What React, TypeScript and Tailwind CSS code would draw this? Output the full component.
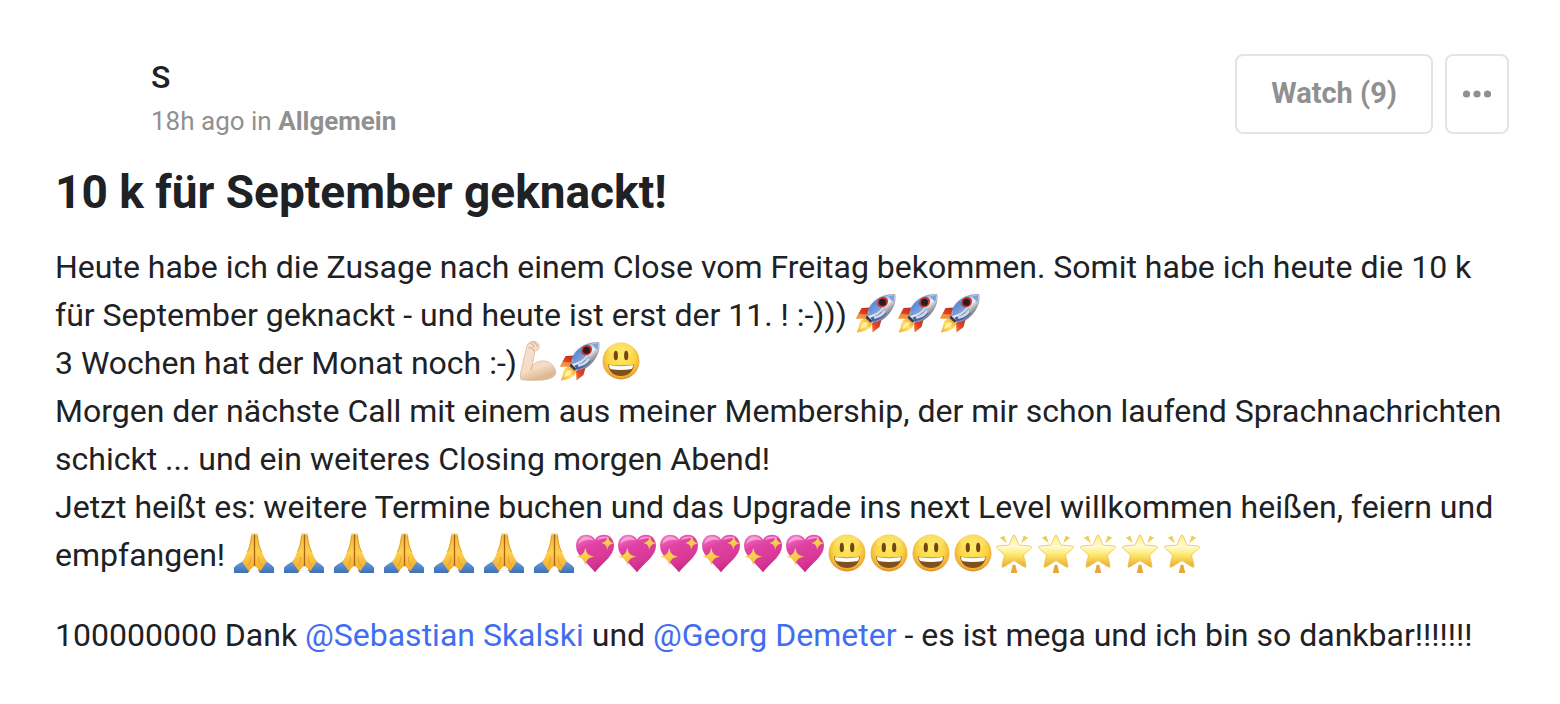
import React from 'react';

type EmojiName = 'rocket' | 'biceps' | 'smile' | 'pray' | 'heart' | 'star';

// shared gradients, referenced by the emoji below
function EmojiDefs() {
  return (
    <svg className="absolute h-0 w-0" aria-hidden="true">
      <defs>
        <linearGradient id="hull" x1="0.25" y1="0.2" x2="0.75" y2="0.8">
          <stop offset="0" stopColor="#4d80d6" />
          <stop offset="0.3" stopColor="#b5cdf0" />
          <stop offset="0.5" stopColor="#f0f1f4" />
          <stop offset="0.75" stopColor="#a6a8b0" />
          <stop offset="1" stopColor="#6c6f79" />
        </linearGradient>
        <linearGradient id="fin" x1="1" y1="0" x2="0" y2="1">
          <stop offset="0" stopColor="#b92619" />
          <stop offset="0.6" stopColor="#e2412a" />
          <stop offset="1" stopColor="#f28a34" />
        </linearGradient>
        <linearGradient id="flame" x1="1" y1="0" x2="0" y2="1">
          <stop offset="0" stopColor="#f08a1e" />
          <stop offset="0.5" stopColor="#ffe066" />
          <stop offset="1" stopColor="#f7a53a" />
        </linearGradient>
        <radialGradient id="face" cx="0.5" cy="0.4" r="0.6">
          <stop offset="0" stopColor="#ffe95c" />
          <stop offset="0.6" stopColor="#fbd548" />
          <stop offset="0.88" stopColor="#efae35" />
          <stop offset="1" stopColor="#d48a26" />
        </radialGradient>
        <linearGradient id="skin" x1="0" y1="0" x2="0.3" y2="1">
          <stop offset="0" stopColor="#f8e0cb" />
          <stop offset="0.75" stopColor="#f4dcc6" />
          <stop offset="1" stopColor="#dfb993" />
        </linearGradient>
        <linearGradient id="hand" x1="0" y1="0" x2="0" y2="1">
          <stop offset="0" stopColor="#f0b63c" />
          <stop offset="0.5" stopColor="#ffcf4e" />
          <stop offset="1" stopColor="#f3ab2d" />
        </linearGradient>
        <linearGradient id="sleeve" x1="0" y1="0" x2="0" y2="1">
          <stop offset="0" stopColor="#6b9fdd" />
          <stop offset="1" stopColor="#3d6fb4" />
        </linearGradient>
        <linearGradient id="love" x1="0.2" y1="0" x2="0.6" y2="1">
          <stop offset="0" stopColor="#f275c2" />
          <stop offset="0.3" stopColor="#e043a4" />
          <stop offset="0.7" stopColor="#d93897" />
          <stop offset="1" stopColor="#c52583" />
        </linearGradient>
        <linearGradient id="gold" x1="0" y1="0" x2="0" y2="1">
          <stop offset="0" stopColor="#ffe163" />
          <stop offset="1" stopColor="#f2b935" />
        </linearGradient>
        <linearGradient id="glow" x1="0" y1="0" x2="0" y2="1">
          <stop offset="0" stopColor="#fdeb83" />
          <stop offset="0.35" stopColor="#fffbd6" />
          <stop offset="0.6" stopColor="#fdea70" />
          <stop offset="1" stopColor="#eaa92c" />
        </linearGradient>
      </defs>
    </svg>
  );
}

const drawings: Record<EmojiName, React.ReactNode> = {
  rocket: (
    <>
      <path d="M16 14.5 6.5 15 1 25.500h12l4-7z" fill="url(#fin)" />
      <path d="M1 25.500 3.500 21l9.500.5v4z" fill="#f2a13a" opacity=".8" />
      <path d="M27.500 23 17 30l.5 9.500L24.500 34z" fill="url(#fin)" />
      <path d="M12 25.500c-4 0-7 2-7.500 5C4 34 3 36 1.700 39.500 6 38.500 11.500 38 14.500 35c2-2 2.500-4 2.500-6z" fill="url(#flame)" />
      <path d="M10 29c-3 2-4 4-5 7 4-1 7-3 8-6z" fill="#fff3a0" />
      <path d="M40 1.500c1 8-2.500 17-10.500 23.500-3.500 3-8 4.500-12 4L12.500 24c-.5-4 1-9.500 5-14C23 4 32 .8 40 1.500z" fill="url(#hull)" stroke="#777b87" strokeWidth=".5" />
      <path d="M20.500 8 14.500 15 13 23c5-1 10-3 14-8z" fill="#4e7fd0" opacity=".7" />
      <path d="M17.500 28.500c5-.5 11-4 14-8.500l-2-5c-3 5-8 8-14 9.500z" fill="#3f64ad" />
      <path d="M18.500 23.500c5-1 8-3 11-8l1.500 3.500c-3 4-7 6-11.500 7z" fill="#cfd7e5" />
      <ellipse cx="27.500" cy="9.200" rx="5.800" ry="5" transform="rotate(-35 27.500 9.200)" fill="#c5372c" />
      <circle cx="27.500" cy="9.200" r="3.500" fill="#251d26" />
      <path d="m12 22.500 5.500 5.500-2 1.500-5-4.500z" fill="#373a46" />
      <path d="M33 3.500c3-1 5-1.300 6.500-1.200 0 2-.5 4.500-1.500 6.700z" fill="#7da3df" />
    </>
  ),
  biceps: (
    <>
      <path
        d="M12.500 1.500C15-.2 18.500 0 20.500 1.800c1.500 1.400 2 4 1.200 5.900-.6 1.500-2.300 1.900-4.200 2.600.2 4-1.700 9-2 14.200 2.500-3 7-5 12-4.500 7 .8 11.500 7 11.200 12-.3 3.500-6 6.500-13 7-8 .5-16 .5-21.700-.5-1.500-5 .5-10 1.500-14.500C6.500 18.500 8 13 9.300 8.500c.2-3 1-5.500 3.200-7z"
        fill="url(#skin)"
        stroke="#dcb695"
        strokeWidth=".8"
      />
      <path d="M13.500 2.500c2 .3 3.500 1.700 3.500 3.500m-1-5c2 .5 3.500 2 4 4M12 7c2-.5 4-.5 5 3M15.500 24.500c-1 1.500-1.700 3-1.500 4.500" fill="none" stroke="#c99b79" strokeWidth=".9" strokeLinecap="round" />
    </>
  ),
  smile: (
    <>
      <circle cx="20" cy="20" r="18.500" fill="url(#face)" />
      <ellipse cx="20" cy="9" rx="13" ry="7" fill="#fff59a" opacity=".3" />
      <ellipse cx="14.800" cy="14.500" rx="2.100" ry="4.700" fill="#734414" />
      <ellipse cx="25.200" cy="14.500" rx="2.100" ry="4.700" fill="#734414" />
      <path d="M7.200 23.500c8 1.600 17.600 1.600 25.600 0C32.500 30.500 27 35 20 35S7.500 30.500 7.200 23.500z" fill="#80501c" />
      <path d="M8 24c7.500 1.500 16.500 1.500 24 0 0 3-1 4-2.500 4.300-6 .9-13 .9-19 0C9 28 8 27 8 24z" fill="#fff" />
    </>
  ),
  pray: (
    <>
      <path d="M1 34.500C4 31.500 8 29 11 28l6 9-2 3H1zM41 34.500C38 31.500 35 29 32 28l-7 9 2 3h14z" fill="url(#sleeve)" />
      <path d="M18.300 1.300c.8-1.500 2.500-1.300 3.200 0 .7-1.300 2.400-1.500 3.200 0 .8 6 1.800 12 4.200 17.200 1.200 3.500 2.500 7 5.100 9.500L27.500 38c-2-1.500-4-4-6-5-2 1-4 3.500-6 5L9 28.500c3-3 4-6.500 5.200-10C16.500 13 17.500 7 18.300 1.300z" fill="url(#hand)" />
      <path d="M21.500 1.500V33" stroke="#a86518" strokeWidth="1.300" />
      <path d="M18.500 3c-.5 6-1.500 11-4 16M24.500 3c.5 6 1.500 11 4 16M17.500 24c.5 4-.5 6-3 9M25.500 24c-.5 4 .5 6 3 9" fill="none" stroke="#d99427" strokeWidth=".7" />
      <path d="M18.500.8h2.200M22.300.8h2.200" stroke="#ffe8a0" strokeWidth="1.200" />
    </>
  ),
  heart: (
    <>
      <path d="M20 6.500C22 3 25.500 1.700 29 1.700c6 0 10 4.800 10 11C39 23 27 30 20 39.300 13 30 1 23 1 12.700c0-6.200 4-11 10-11 3.500 0 7 1.300 9 4.800z" fill="url(#love)" />
      <path d="M3.500 11C4 6 7.500 3.500 11.500 3.500c3 0 5.500 1.500 7 4C14 6 8 7 3.500 11z" fill="#fbb4df" opacity=".75" />
      <path d="M22 7c1.500-2.500 4.500-3.500 7.500-3.400 1.500 0 3 .5 4.500 1.600C30 5 26 5.500 22 7z" fill="#fbb4df" opacity=".75" />
      <path d="M10.300 14.500c1 6 2.500 7.700 8.700 9.200-6 1.300-7.700 3-8.700 9.300-1-6.300-3-8-8.800-9.300 6-1.500 7.800-3.200 8.800-9.200z" fill="url(#gold)" />
      <path d="M33 2.500c.5 5 1.700 6.500 5.800 7.800-4.300 1.200-5.800 2.700-6.600 7-.5-4.500-1.700-6.300-5.800-7.300 4.300-1.300 5.900-2.800 6.600-7.500z" fill="url(#gold)" />
    </>
  ),
  star: (
    <>
      <path
        d="M19 1.800c1 0 3.500 7.300 4.700 9.600.3.600.7.800 1.300.8 3.500.2 11.700.6 11.700 1.800 0 1-5.500 5.500-7.600 7.300-.6.500-.7 1-.5 1.700.8 3 3 10.500 2.100 11.200-.9.600-7.700-4.200-11-6.200-.5-.3-.9-.3-1.400 0-3.300 2-10.100 6.800-11 6.200-.9-.7 1.300-8.200 2.100-11.200.2-.7.100-1.200-.5-1.700C6.800 19.500 1.300 15 1.300 14c0-1.200 8.200-1.600 11.700-1.800.6 0 1-.2 1.300-.8C15.500 9.100 18 1.800 19 1.800z"
        fill="url(#glow)"
        stroke="#efc24b"
        strokeWidth=".9"
      />
      <path d="m4.800 4.800 4.500-2 2.500 7.500zM33.200 4.800l-4.500-2-2.500 7.500z" fill="#f1cb4f" />
      <path d="M17.700 31.700h2.600l2 8.300h-6.600z" fill="#e5a63c" />
    </>
  ),
};

const glyphs: Record<EmojiName, string> = {
  rocket: '🚀',
  biceps: '💪🏻',
  smile: '😃',
  pray: '🙏',
  heart: '💖',
  star: '🌟',
};

function Emoji({ name }: { name: EmojiName }) {
  return (
    <svg viewBox="0 0 42 42" role="img" aria-label={glyphs[name]} className="inline-block h-[42px] w-[42px] align-[-9px]">
      {drawings[name]}
    </svg>
  );
}

function EmojiRow({ name, count }: { name: EmojiName; count: number }) {
  return (
    <>
      {Array.from({ length: count }, (_, i) => (
        <Emoji key={i} name={name} />
      ))}
    </>
  );
}

export default function App() {
  return (
    <article className="bg-white pt-[54px] pr-[51px] pb-11 pl-[55px] font-['Roboto',sans-serif] text-[#202124]">
      <EmojiDefs />
      <header className="flex items-start justify-between">
        <div className="pl-24">
          <div className="text-[32px] leading-[46px] font-medium">S</div>
          <div className="text-[26px] leading-[42px] text-[#909090]">
            18h ago in{' '}
            <a href="#allgemein" className="font-bold">
              Allgemein
            </a>
          </div>
        </div>
        <div className="flex gap-3">
          <button type="button" className="h-20 rounded-lg border-2 border-[#e4e4e4] px-[34px] text-[29px] font-bold text-[#909090]">
            Watch (9)
          </button>
          <button
            type="button"
            aria-label="More"
            className="flex h-20 w-16 items-center justify-center rounded-lg border-2 border-[#e4e4e4] text-[#909090]"
          >
            <svg viewBox="0 0 30 8" className="h-2 w-[30px]" fill="currentColor" aria-hidden="true">
              <circle cx="4.500" cy="4" r="3.600" />
              <circle cx="15" cy="4" r="3.600" />
              <circle cx="25.500" cy="4" r="3.600" />
            </svg>
          </button>
        </div>
      </header>

      <h1 className="mt-5 text-[46px] leading-[60px] font-bold">10 k für September geknackt!</h1>

      <div className="mt-[21px] text-[32px] leading-[48px]">
        <p>
          Heute habe ich die Zusage nach einem Close vom Freitag bekommen. Somit habe ich heute die 10 k für September
          geknackt - und heute ist erst der 11. ! :-))) <EmojiRow name="rocket" count={3} />
          <br />
          3 Wochen hat der Monat noch :-)
          <Emoji name="biceps" />
          <Emoji name="rocket" />
          <Emoji name="smile" />
          <br />
          Morgen der nächste Call mit einem aus meiner Membership, der mir schon laufend Sprachnachrichten schickt ...
          und ein weiteres Closing morgen Abend!
          <br />
          Jetzt heißt es: weitere Termine buchen und das Upgrade ins next Level willkommen heißen, feiern und
          empfangen!{' '}
          {Array.from({ length: 6 }, (_, i) => (
            <React.Fragment key={i}>
              <Emoji name="pray" />{' '}
            </React.Fragment>
          ))}
          <Emoji name="pray" />
          <EmojiRow name="heart" count={6} />
          <EmojiRow name="smile" count={4} />
          <EmojiRow name="star" count={5} />
        </p>
        <p className="mt-8">
          100000000 Dank{' '}
          <a href="#sebastian-skalski" className="text-[#416ef0]">
            @Sebastian Skalski
          </a>{' '}
          und{' '}
          <a href="#georg-demeter" className="text-[#416ef0]">
            @Georg Demeter
          </a>{' '}
          - es ist mega und ich bin so dankbar!!!!!!!
        </p>
      </div>
    </article>
  );
}
